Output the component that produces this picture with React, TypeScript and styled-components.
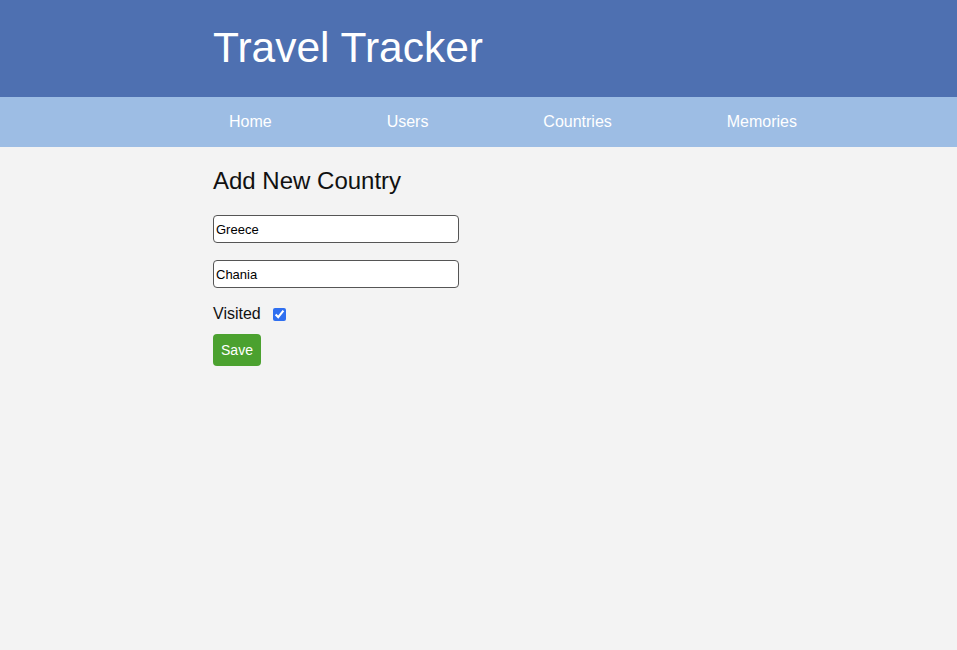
import styled, { createGlobalStyle } from 'styled-components';

const GlobalStyle = createGlobalStyle`
    body {
        margin: 0;
        background: #f3f3f3;
        font-family: "Liberation Sans", Arial, sans-serif;
    }
`

const Header = styled.header`
    background: #4e70b1;
    height: 97px;
    display: flex;
    align-items: center;
    padding-left: 213px;
`

const Title = styled.h1`
    margin: 0;
    color: #fff;
    font-size: 42.5px;
    font-weight: 400;
    padding-bottom: 2px;
`

const Nav = styled.nav`
    background: #9dbde4;
    height: 50px;
    display: flex;
    align-items: center;
    padding-left: 213px;
`

const NavList = styled.ul`
    list-style: none;
    margin: 0;
    padding: 0;
    width: 600px;
    display: flex;
    justify-content: space-between;
`

const NavLink = styled.a`
    display: block;
    padding: 0 16px;
    color: #fff;
    font-size: 16px;
    text-decoration: none;
`

const Main = styled.main`
    padding: 20px 0 0 213px;
`

const Form = styled.form`
    display: flex;
    flex-direction: column;
    align-items: flex-start;
`

const Heading = styled.h2`
    margin: 0 0 20px;
    font-size: 24px;
    font-weight: 400;
    color: #111;
    line-height: 28px;
`

const TextInput = styled.input`
    box-sizing: border-box;
    width: 246px;
    height: 28px;
    border: 1px solid #555;
    border-radius: 4px;
    padding: 0 2px;
    font-family: "Liberation Sans", Arial, sans-serif;
    font-size: 13px;
    color: #000;
    background: #fff;
    margin-bottom: 17px;
`

const CheckRow = styled.label`
    display: flex;
    align-items: center;
    gap: 12px;
    font-size: 16px;
    color: #111;
    height: 18px;
    margin-bottom: 11px;
`

const Check = styled.input`
    width: 13px;
    height: 13px;
    margin: 0;
    accent-color: #2f6ff0;
`

const SaveButton = styled.button`
    background: #4ba12f;
    color: #fff;
    border: none;
    border-radius: 4px;
    width: 48px;
    height: 32px;
    font-family: "Liberation Sans", Arial, sans-serif;
    font-size: 14px;
    font-weight: 400;
    cursor: pointer;
`

const links = ["Home", "Users", "Countries", "Memories"];

const App = () => {
    return (
        <>
            <GlobalStyle />
            <Header>
                <Title>Travel Tracker</Title>
            </Header>
            <Nav>
                <NavList>
                    {links.map(l => (
                        <li key={l}><NavLink href="#">{l}</NavLink></li>
                    ))}
                </NavList>
            </Nav>
            <Main>
                <Form onSubmit={e => e.preventDefault()}>
                    <Heading>Add New Country</Heading>
                    <TextInput type="text" defaultValue="Greece" />
                    <TextInput type="text" defaultValue="Chania" />
                    <CheckRow>
                        Visited
                        <Check type="checkbox" defaultChecked />
                    </CheckRow>
                    <SaveButton type="submit">Save</SaveButton>
                </Form>
            </Main>
        </>
    )
}

export default App;
